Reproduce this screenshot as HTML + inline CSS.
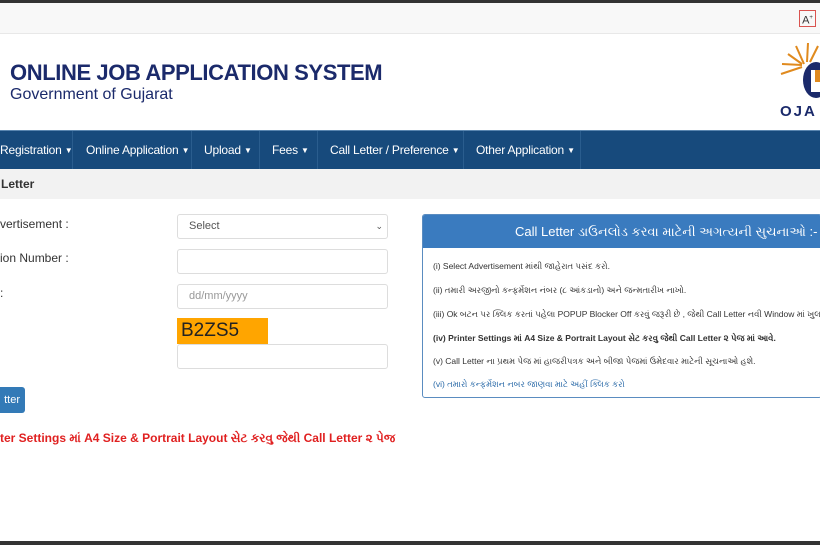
<!DOCTYPE html>
<html><head><meta charset="utf-8"><style>
*{margin:0;padding:0;box-sizing:border-box}
body{width:820px;height:545px;overflow:hidden;background:#fff;font-family:"Liberation Sans",sans-serif;position:relative;color:#333}
.topbar{position:absolute;top:0;left:0;width:820px;height:3px;background:#333}
.strip{position:absolute;top:3px;left:0;width:820px;height:31px;background:#f8f8f8;border-bottom:1px solid #e8e8e8}
.aplus{position:absolute;left:799px;top:10px;width:17px;height:17px;border:1px solid #d9534f;font-size:11px;text-align:center;line-height:15px;color:#333}
.title{position:absolute;left:10px;top:60px;font-size:22px;font-weight:bold;color:#1b2a6b;letter-spacing:-0.4px;white-space:nowrap}
.sub{position:absolute;left:10px;top:86px;font-size:16px;color:#1b2a6b}
.nav{position:absolute;top:130px;left:0;width:820px;height:39px;background:#174a7c;border-top:1px solid #5a86b0}
.nav span{position:absolute;top:0;height:38px;line-height:38px;color:#fff;font-size:12px;border-right:1px solid #2a5d8e;white-space:nowrap;letter-spacing:-0.2px}
.nav b{font-weight:normal;font-size:8px;vertical-align:1px}
.crumb{position:absolute;top:169px;left:0;width:820px;height:30px;background:#f2f2f2;font-size:12px;font-weight:bold;line-height:30px;padding-left:1px}
.lbl{position:absolute;left:0;font-size:12px;color:#333}
.inp{position:absolute;left:177px;width:211px;height:25px;border:1px solid #ddd;border-radius:3px;font-size:11px;color:#999;padding-left:11px;line-height:23px}
.cap{position:absolute;left:177px;top:318px;width:91px;height:26px;background:#ffa500;font-size:19px;color:#222;padding-left:4px;line-height:26px}
.btn{position:absolute;left:-6px;top:387px;width:31px;height:26px;background:#337ab7;border-radius:3px;color:#fff;font-size:11px;line-height:27px;text-align:right;padding-right:5px}
.red{position:absolute;left:0;top:431px;font-size:12px;font-weight:bold;color:#e02020;white-space:nowrap}
.panel{position:absolute;left:422px;top:214px;width:400px;height:184px;border:1px solid #5a8cc0;border-radius:3px;overflow:hidden}
.ph{height:33px;background:#3a7bbf;color:#fff;font-size:13px;line-height:33px;padding-left:92px;white-space:nowrap}
.panel p{font-size:8.5px;color:#333;position:absolute;left:10px;white-space:nowrap}
.bottom{position:absolute;top:541px;left:0;width:820px;height:4px;background:#333}
</style></head><body>
<div class="topbar"></div>
<div class="strip"></div>
<div class="aplus">A<sup style="font-size:6px">+</sup></div>
<div class="title">ONLINE JOB APPLICATION SYSTEM</div>
<div class="sub">Government of Gujarat</div>
<svg style="position:absolute;left:776px;top:40px" width="44" height="78">
<g stroke="#e08a1e" stroke-width="2">
<line x1="26" y1="24" x2="12" y2="14"/><line x1="26" y1="25" x2="6" y2="24"/><line x1="26" y1="27" x2="5" y2="34"/><line x1="28" y1="24" x2="20" y2="6"/><line x1="31" y1="22" x2="32" y2="3"/><line x1="34" y1="22" x2="42" y2="6"/></g>
<ellipse cx="40" cy="40" rx="13" ry="18" fill="#1b2a6b"/>
<path d="M35 30 h9 v22 h-9 z" fill="#fff"/><path d="M39 30 h5 v12 h-5z" fill="#e08a1e"/>
<text x="4" y="76" font-family="Liberation Sans" font-weight="bold" font-size="15" fill="#1b2a6b" letter-spacing="2">OJA</text>
</svg>
<div class="nav">
<span style="left:0;width:73px">Registration <b>▼</b></span>
<span style="left:74px;width:118px;padding-left:12px">Online Application <b>▼</b></span>
<span style="left:192px;width:68px;padding-left:12px">Upload <b>▼</b></span>
<span style="left:260px;width:58px;padding-left:12px">Fees <b>▼</b></span>
<span style="left:318px;width:146px;padding-left:12px">Call Letter / Preference <b>▼</b></span>
<span style="left:464px;width:117px;padding-left:12px">Other Application <b>▼</b></span>
</div>
<div class="crumb">Letter</div>
<div class="lbl" style="top:217px">vertisement :</div>
<div class="lbl" style="top:251px">ion Number :</div>
<div class="lbl" style="top:286px">:</div>
<div class="inp" style="top:214px;color:#555">Select<span style="position:absolute;right:4px;font-size:9px">⌄</span></div>
<div class="inp" style="top:249px"></div>
<div class="inp" style="top:284px">dd/mm/yyyy</div>
<div class="cap">B2ZS5</div>
<div class="inp" style="top:344px"></div>
<div class="btn">tter</div>
<div class="red">ter Settings માં A4 Size &amp; Portrait Layout સેટ કરવુ જેથી Call Letter ૨ પેજ</div>
<div class="panel">
<div class="ph">Call Letter ડાઉનલોડ કરવા માટેની અગત્યની સુચનાઓ :-</div>
<p style="top:46px">(i) Select Advertisement માંથી જાહેરાત પસંદ કરો.</p>
<p style="top:70px">(ii) તમારી અરજીનો કન્ફર્મેશન નંબર (૮ આંકડાનો) અને જન્મતારીખ નાખો.</p>
<p style="top:94px">(iii) Ok બટન પર ક્લિક કરતાં પહેલા POPUP Blocker Off કરવું જરૂરી છે , જેથી Call Letter નવી Window માં ખુલશે.</p>
<p style="top:118px;font-weight:bold">(iv) Printer Settings માં A4 Size &amp; Portrait Layout સેટ કરવુ જેથી Call Letter ૨ પેજ માં આવે.</p>
<p style="top:141px">(v) Call Letter ના પ્રથમ પેજ માં હાજરીપત્રક અને બીજા પેજમાં ઉમેદવાર માટેની સૂચનાઓ હશે.</p>
<p style="top:164px;color:#2a6aa8">(vi) તમારો કન્ફર્મેશન નબર જાણવા માટે અહીં ક્લિક કરો</p>
</div>
<div class="bottom"></div>
</body></html>
